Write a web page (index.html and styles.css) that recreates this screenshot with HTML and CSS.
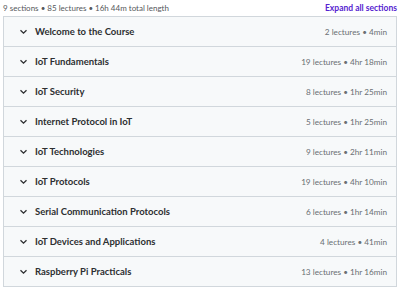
FILE: index.html
```html
<!DOCTYPE html>
<html lang="en">
<head>
  <meta charset="UTF-8" />
  <meta name="viewport" content="width=device-width, initial-scale=1.0" />
  <title>Course content</title>
  <link rel="stylesheet" href="styles.css">
</head>
<body>
  <div class="curriculum">
    <div class="summary">
      <span>9 sections • 85 lectures • 16h 44m total length</span>
      <button class="expand">Expand all sections</button>
    </div>

    <div class="sections">
      <div class="section">
        <span class="chev"><svg width="9" height="6" viewBox="0 0 9 6"><path d="M1.5 1.2l3 3 3-3" fill="none" stroke="#2d2f31" stroke-width="1.3"/></svg></span>
        <span class="title">Welcome to the Course</span>
        <span class="meta">2 lectures • 4min</span>
      </div>
      <div class="section">
        <span class="chev"><svg width="9" height="6" viewBox="0 0 9 6"><path d="M1.5 1.2l3 3 3-3" fill="none" stroke="#2d2f31" stroke-width="1.3"/></svg></span>
        <span class="title">IoT Fundamentals</span>
        <span class="meta">19 lectures • 4hr 18min</span>
      </div>
      <div class="section">
        <span class="chev"><svg width="9" height="6" viewBox="0 0 9 6"><path d="M1.5 1.2l3 3 3-3" fill="none" stroke="#2d2f31" stroke-width="1.3"/></svg></span>
        <span class="title">IoT Security</span>
        <span class="meta">8 lectures • 1hr 25min</span>
      </div>
      <div class="section">
        <span class="chev"><svg width="9" height="6" viewBox="0 0 9 6"><path d="M1.5 1.2l3 3 3-3" fill="none" stroke="#2d2f31" stroke-width="1.3"/></svg></span>
        <span class="title">Internet Protocol in IoT</span>
        <span class="meta">5 lectures • 1hr 25min</span>
      </div>
      <div class="section">
        <span class="chev"><svg width="9" height="6" viewBox="0 0 9 6"><path d="M1.5 1.2l3 3 3-3" fill="none" stroke="#2d2f31" stroke-width="1.3"/></svg></span>
        <span class="title">IoT Technologies</span>
        <span class="meta">9 lectures • 2hr 11min</span>
      </div>
      <div class="section">
        <span class="chev"><svg width="9" height="6" viewBox="0 0 9 6"><path d="M1.5 1.2l3 3 3-3" fill="none" stroke="#2d2f31" stroke-width="1.3"/></svg></span>
        <span class="title">IoT Protocols</span>
        <span class="meta">19 lectures • 4hr 10min</span>
      </div>
      <div class="section">
        <span class="chev"><svg width="9" height="6" viewBox="0 0 9 6"><path d="M1.5 1.2l3 3 3-3" fill="none" stroke="#2d2f31" stroke-width="1.3"/></svg></span>
        <span class="title">Serial Communication Protocols</span>
        <span class="meta">6 lectures • 1hr 14min</span>
      </div>
      <div class="section">
        <span class="chev"><svg width="9" height="6" viewBox="0 0 9 6"><path d="M1.5 1.2l3 3 3-3" fill="none" stroke="#2d2f31" stroke-width="1.3"/></svg></span>
        <span class="title">IoT Devices and Applications</span>
        <span class="meta">4 lectures • 41min</span>
      </div>
      <div class="section">
        <span class="chev"><svg width="9" height="6" viewBox="0 0 9 6"><path d="M1.5 1.2l3 3 3-3" fill="none" stroke="#2d2f31" stroke-width="1.3"/></svg></span>
        <span class="title">Raspberry Pi Practicals</span>
        <span class="meta">13 lectures • 1hr 16min</span>
      </div>
    </div>
  </div>
</body>
</html>
```

FILE: styles.css
```css
body {
  margin: 0;
  font-family: Lato, 'Noto Sans', sans-serif;
  background: #fff;
  color: #2d2f31;
}
.curriculum {
  padding: 0 3px 0 3px;
}
.summary {
  display: flex;
  justify-content: space-between;
  align-items: center;
  height: 16px;
  font-size: 8px;
  color: #55585b;
}
.expand {
  background: none;
  border: none;
  padding: 0;
  font-family: inherit;
  font-size: 8.5px;
  font-weight: 700;
  color: #5624d0;
  cursor: pointer;
}
.sections {
  border: 1px solid #d1d7dc;
  border-bottom: none;
}
.section {
  display: flex;
  align-items: center;
  height: 29px;
  padding: 0 9px 0 15px;
  background: #f7f9fa;
  border-bottom: 1px solid #d1d7dc;
}
.chev {
  display: flex;
  width: 16px;
}
.title {
  flex: 1;
  font-size: 9.5px;
  font-weight: 700;
}
.meta {
  font-size: 8.2px;
  color: #6a6f73;
}
```
